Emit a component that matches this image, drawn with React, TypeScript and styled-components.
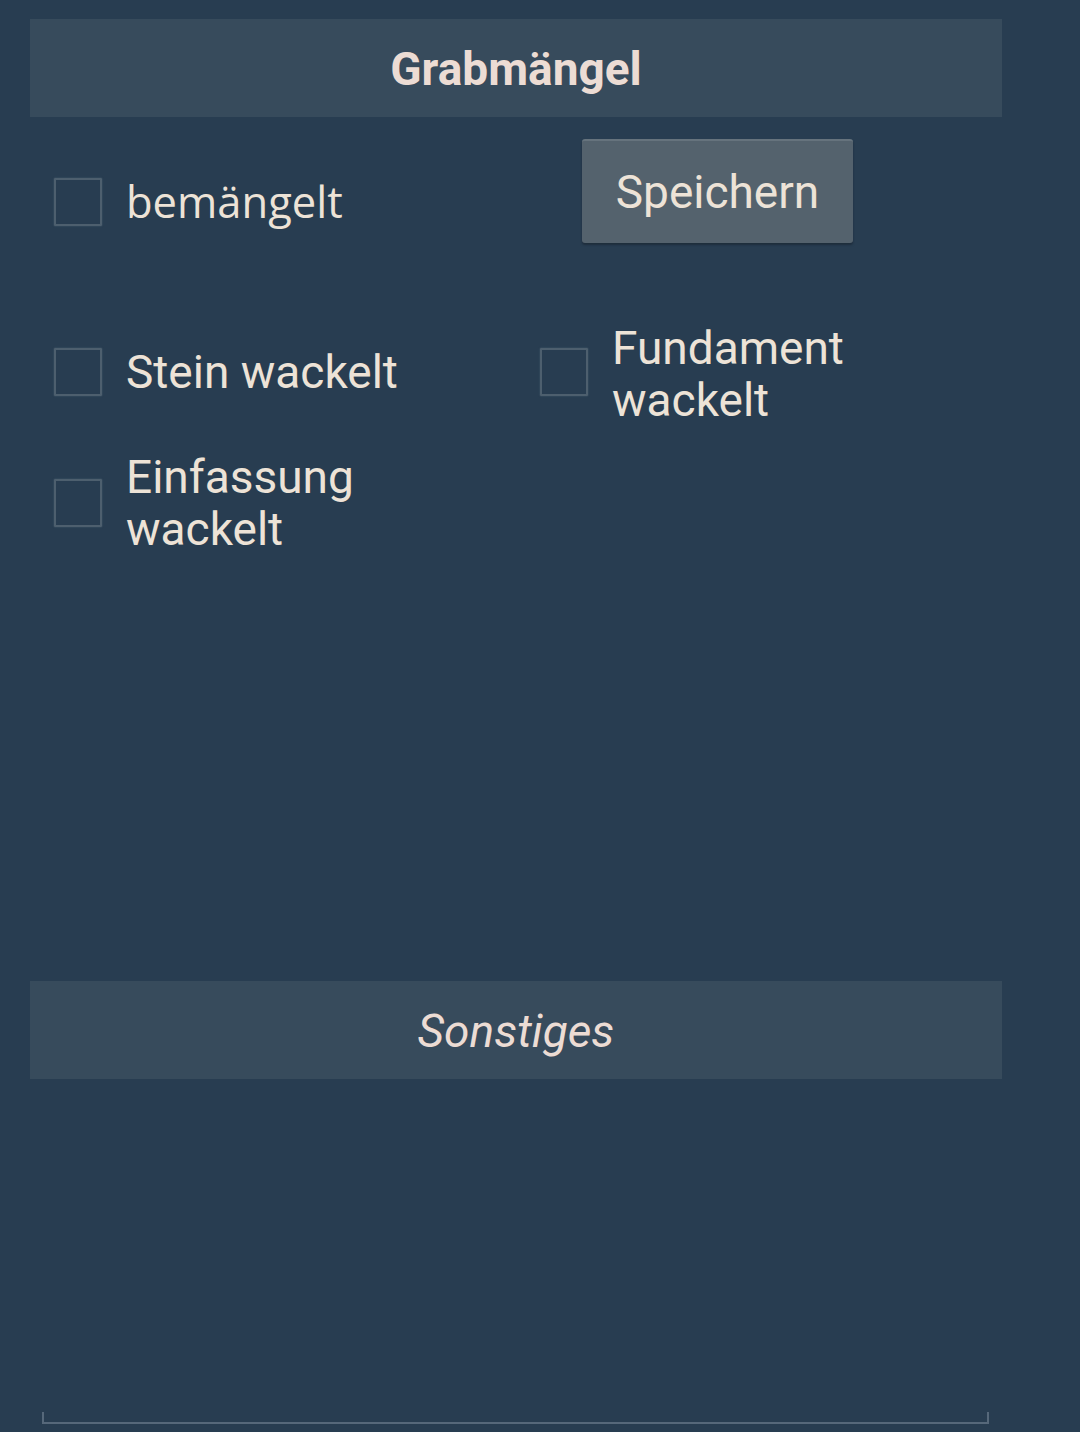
import React from "react";
import styled, { createGlobalStyle } from "styled-components";

const Global = createGlobalStyle`
  html, body {
    margin: 0;
    padding: 0;
    background: #283d51;
  }
  body {
    font-family: Roboto, "Noto Sans", sans-serif;
  }
`;

const Screen = styled.div`
  width: 1080px;
  height: 1432px;
  background: #283d51;
  box-sizing: border-box;
  padding: 19px 0 0 30px;
  display: flex;
  flex-direction: column;
  overflow: hidden;
`;

const Panel = styled.div`
  width: 972px;
  display: flex;
  flex-direction: column;
`;

const SectionBar = styled.div<{ $italic?: boolean }>`
  height: 98px;
  background: #374b5c;
  display: flex;
  align-items: center;
  justify-content: center;
  font-family: Roboto, sans-serif;
  font-size: 46px;
  font-weight: ${(p) => (p.$italic ? 400 : 700)};
  font-style: ${(p) => (p.$italic ? "italic" : "normal")};
  color: #ecdcd4;
  padding-top: 2px;
  box-sizing: border-box;
`;

const Row = styled.div<{ $top: number }>`
  display: grid;
  grid-template-columns: 486px 486px;
  margin-top: ${(p) => p.$top}px;
  align-items: start;
`;

const CheckItem = styled.label<{ $offset?: number; $serif?: boolean }>`
  display: flex;
  align-items: center;
  gap: 24px;
  padding-left: 24px;
  margin-top: ${(p) => p.$offset ?? 0}px;
  font-family: ${(p) => (p.$serif ? '"Open Sans", "Noto Sans", sans-serif' : "Roboto, sans-serif")};
  font-size: ${(p) => (p.$serif ? 43.5 : 46)}px;
  line-height: 52px;
  color: #ede3d7;
`;

const Box = styled.span<{ $lift?: number }>`
  flex: none;
  width: 48px;
  height: 48px;
  box-sizing: border-box;
  border: 2px solid #4d5f6e;
  border-radius: 1px;
  box-shadow: 0 0 1.5px rgba(120, 140, 155, 0.55);
  margin-bottom: ${(p) => (p.$lift ?? 0) * 2}px;
`;

const ButtonCell = styled.div`
  padding-left: 66px;
`;

const SaveButton = styled.button`
  width: 271px;
  height: 104px;
  background: #54626d;
  border: none;
  border-top: 2px solid #66737d;
  border-radius: 3px;
  box-shadow: 0 2px 2px rgba(20, 30, 40, 0.5);
  font-family: Roboto, sans-serif;
  font-size: 46px;
  color: #ede3d7;
  padding: 0;
`;

const Gap = styled.div<{ $h: number }>`
  flex: none;
  height: ${(p) => p.$h}px;
`;

const Spacer = styled.div`
  flex: 1;
`;

const EditLine = styled.div`
  margin: 0 0 8px 12px;
  width: 947px;
  height: 12px;
  box-sizing: border-box;
  border: 2px solid #56687a;
  border-top: none;
`;

export default function App() {
  return (
    <>
      <Global />
      <Screen>
        <Panel>
          <SectionBar>Grabmängel</SectionBar>
          <Row $top={22}>
            <CheckItem $offset={37} $serif>
              <Box />
              bemängelt
            </CheckItem>
            <ButtonCell>
              <SaveButton>Speichern</SaveButton>
            </ButtonCell>
          </Row>
          <Row $top={79}>
            <CheckItem $offset={24}>
              <Box />
              Stein wackelt
            </CheckItem>
            <CheckItem>
              <Box $lift={2} />
              <span>
                Fundament
                <br />
                wackelt
              </span>
            </CheckItem>
          </Row>
          <Row $top={25}>
            <CheckItem>
              <Box />
              <span>
                Einfassung
                <br />
                wackelt
              </span>
            </CheckItem>
          </Row>
          <Gap $h={426} />
          <SectionBar $italic>Sonstiges</SectionBar>
        </Panel>
        <Spacer />
        <EditLine />
      </Screen>
    </>
  );
}
